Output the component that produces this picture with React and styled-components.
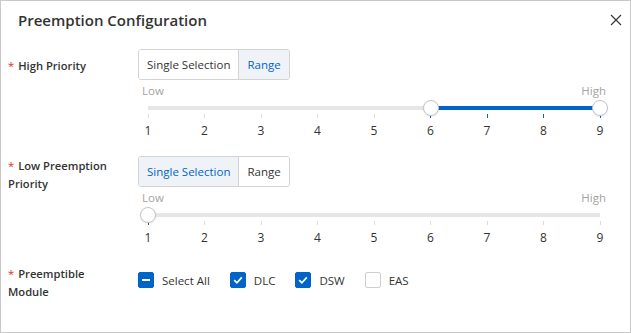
import React from "react";
import styled, { createGlobalStyle } from "styled-components";

const GlobalStyle = createGlobalStyle`
  html, body {
    margin: 0;
    padding: 0;
    background: #fff;
  }
  body {
    font-family: "Segoe UI", "Open Sans", "Noto Sans", sans-serif;
    color: #333;
  }
  * {
    box-sizing: border-box;
  }
`;

const BLUE = "#0064c8";

// Dialog shell
const Dialog = styled.div`
  width: 631px;
  height: 333px;
  border: 1px solid #c9c9c9;
  background: #fff;
`;

const Header = styled.div`
  display: flex;
  align-items: center;
  justify-content: space-between;
  height: 24px;
  margin-top: 7px;
  padding: 0 7px 0 17px;
`;

const Title = styled.h2`
  margin: 0;
  font-size: 15px;
  font-weight: 600;
  line-height: 24px;
  color: #333;
`;

const CloseButton = styled.button`
  display: flex;
  align-items: center;
  justify-content: center;
  width: 14px;
  height: 14px;
  padding: 0;
  border: none;
  background: none;
  color: #333;
  cursor: pointer;
`;

const Body = styled.div`
  padding: 17px 20px 0 7px;
`;

const FormItem = styled.div`
  display: flex;
  align-items: flex-start;
  margin-bottom: ${(p) => p.$gap || 0}px;
`;

const Label = styled.div`
  width: 130px;
  flex-shrink: 0;
  padding-top: ${(p) => p.$offset || 0}px;
  padding-right: 12px;
  font-size: 11.2px;
  font-weight: 600;
  line-height: 18px;
  color: #333;
`;

const Required = styled.span`
  color: #d93026;
  margin-right: 4px;
  font-weight: 400;
`;

const Control = styled.div`
  width: 472px;
`;

// Segmented toggle
const Segmented = styled.div`
  display: inline-flex;
  border: 1px solid #d3d3d3;
  border-radius: 3px;
  overflow: hidden;
`;

const Segment = styled.button`
  height: 29px;
  padding: 0 8px;
  border: none;
  border-left: ${(p) => (p.$first ? "none" : "1px solid #d3d3d3")};
  background: ${(p) => (p.$active ? "#eff3f8" : "#fff")};
  color: ${(p) => (p.$active ? BLUE : "#333")};
  font-family: inherit;
  font-size: 11.5px;
  cursor: pointer;
`;

// Slider
const SliderEnds = styled.div`
  display: flex;
  justify-content: space-between;
  margin-top: 3px;
  padding: 0 4px;
  height: 16px;
  font-size: 11.5px;
  line-height: 16px;
  color: #a3a3a3;
`;

const Rail = styled.div`
  position: relative;
  height: 40px;
  margin: 0 10px;
`;

const Track = styled.div`
  position: absolute;
  left: 0;
  right: 0;
  top: 7px;
  height: 4px;
  background: #e6e6e6;
`;

const ActiveTrack = styled.div`
  position: absolute;
  top: 7px;
  height: 4px;
  background: ${BLUE};
`;

const Tick = styled.div`
  position: absolute;
  top: 15px;
  width: 1px;
  height: 4px;
  margin-left: -0.5px;
  background: ${(p) => (p.$on ? BLUE : "#dcdcdc")};
`;

const Mark = styled.span`
  position: absolute;
  top: 23px;
  transform: translateX(-50%);
  font-size: 12px;
  line-height: 18px;
  color: #333;
`;

const Handle = styled.div`
  position: absolute;
  top: 1px;
  width: 16px;
  height: 16px;
  margin-left: -8px;
  border-radius: 50%;
  background: #fff;
  border: 1px solid #c4c4c4;
  box-shadow: 0 1px 2px rgba(0, 0, 0, 0.08);
`;

// Checkboxes
const CheckGroup = styled.div`
  display: flex;
  align-items: center;
  gap: 20px;
  height: 30px;
`;

const CheckItem = styled.label`
  display: flex;
  align-items: center;
  gap: 8px;
  font-size: 11.5px;
  color: #333;
  cursor: pointer;
`;

const Box = styled.span`
  display: flex;
  align-items: center;
  justify-content: center;
  width: 16px;
  height: 16px;
  border-radius: 2px;
  background: ${(p) => (p.$on ? BLUE : "#fff")};
  border: 1px solid ${(p) => (p.$on ? BLUE : "#cfcfcf")};
`;

const marks = [1, 2, 3, 4, 5, 6, 7, 8, 9];

function Slider({ from, to, range }) {
  const pos = (v) => ((v - 1) / 8) * 100;
  return (
    <>
      <SliderEnds>
        <span>Low</span>
        <span>High</span>
      </SliderEnds>
      <Rail>
        <Track />
        <ActiveTrack
          style={{ left: `${pos(from)}%`, width: `${pos(to) - pos(from)}%` }}
        />
        {marks.map((m) => (
          <React.Fragment key={m}>
            <Tick style={{ left: `${pos(m)}%` }} $on={m >= from && m <= to && (range || m === from)} />
            <Mark style={{ left: `${pos(m)}%` }}>{m}</Mark>
          </React.Fragment>
        ))}
        {range && <Handle style={{ left: `${pos(from)}%` }} />}
        <Handle style={{ left: `${pos(to)}%` }} />
      </Rail>
    </>
  );
}

function Checkbox({ state, children }) {
  return (
    <CheckItem>
      <Box $on={state !== "off"}>
        {state === "on" && (
          <svg width="12" height="12" viewBox="0 0 12 12">
            <path d="M2.2 6.2 L4.9 8.8 L9.8 3.4" fill="none" stroke="#fff" strokeWidth="1.8" />
          </svg>
        )}
        {state === "half" && (
          <svg width="12" height="12" viewBox="0 0 12 12">
            <path d="M2 6 H10" stroke="#fff" strokeWidth="2" />
          </svg>
        )}
      </Box>
      {children}
    </CheckItem>
  );
}

export default function App() {
  return (
    <>
      <GlobalStyle />
      <Dialog>
        <Header>
          <Title>Preemption Configuration</Title>
          <CloseButton aria-label="close">
            <svg width="12" height="12" viewBox="0 0 12 12">
              <path d="M1 1 L11 11 M11 1 L1 11" stroke="#333" strokeWidth="1.1" />
            </svg>
          </CloseButton>
        </Header>
        <Body>
          <FormItem $gap={17}>
            <Label $offset={8}>
              <Required>*</Required>High Priority
            </Label>
            <Control>
              <Segmented>
                <Segment $first>Single Selection</Segment>
                <Segment $active>Range</Segment>
              </Segmented>
              <Slider from={6} to={9} range />
            </Control>
          </FormItem>

          <FormItem $gap={19}>
            <Label $offset={1}>
              <Required>*</Required>Low Preemption Priority
            </Label>
            <Control>
              <Segmented>
                <Segment $first $active>Single Selection</Segment>
                <Segment>Range</Segment>
              </Segmented>
              <Slider from={1} to={1} />
            </Control>
          </FormItem>

          <FormItem>
            <Label>
              <Required>*</Required>Preemptible Module
            </Label>
            <Control>
              <CheckGroup>
                <Checkbox state="half">Select All</Checkbox>
                <Checkbox state="on">DLC</Checkbox>
                <Checkbox state="on">DSW</Checkbox>
                <Checkbox state="off">EAS</Checkbox>
              </CheckGroup>
            </Control>
          </FormItem>
        </Body>
      </Dialog>
    </>
  );
}
